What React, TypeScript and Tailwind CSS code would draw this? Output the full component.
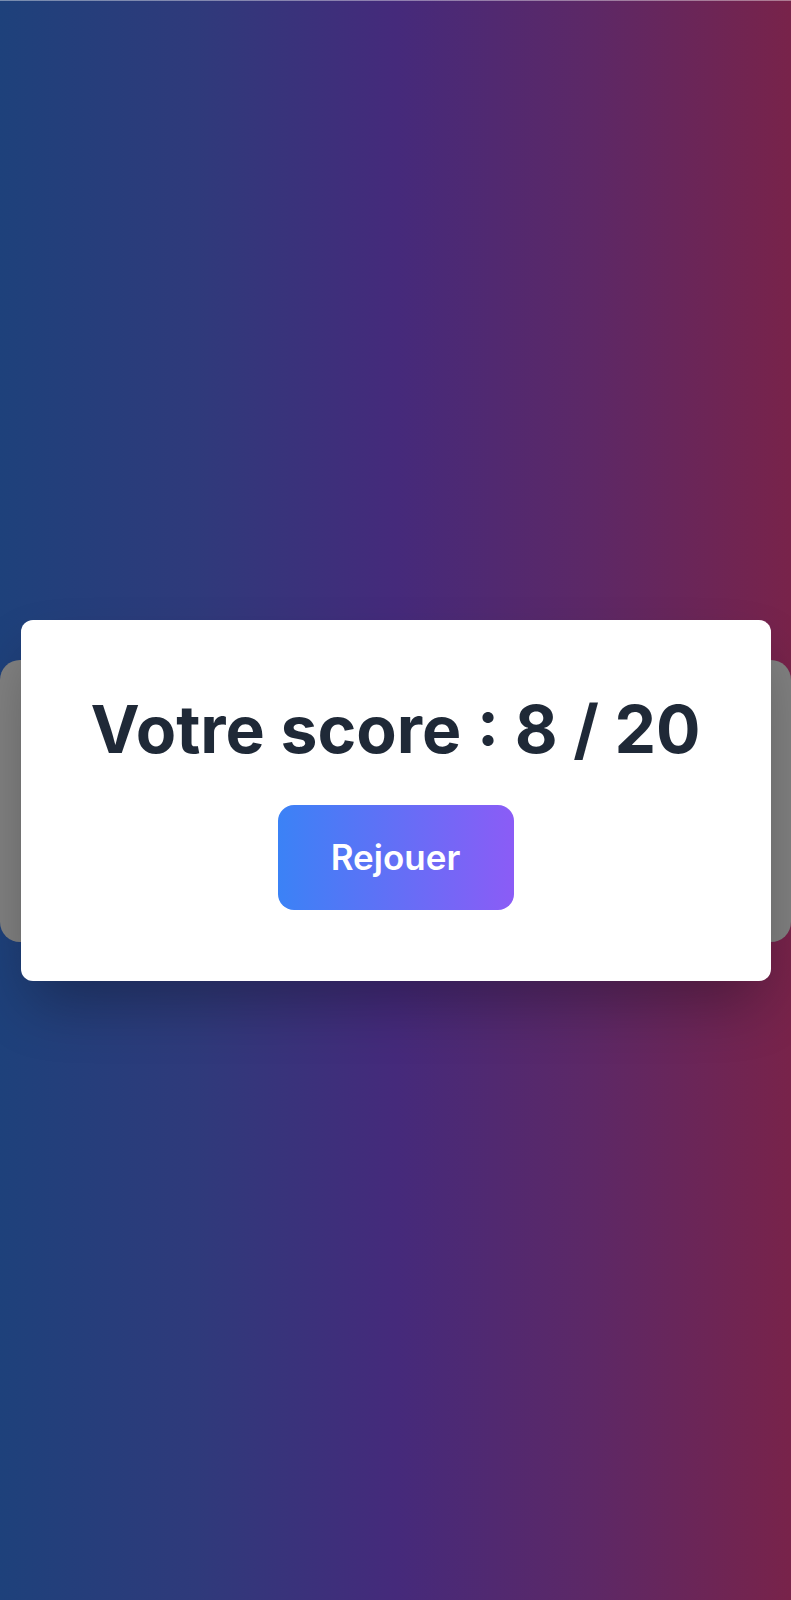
import React from "react";

export default function App() {
  return (
    <div
      className="relative h-[1600px] w-full overflow-hidden border-t border-white/40 bg-[linear-gradient(to_right,#1e417b,#2f3a7b,#452a7b,#5d2866,#78234a)]"
      style={{ fontFamily: "Inter, 'Noto Sans', sans-serif" }}
    >
      <div className="grid h-full w-full place-items-center">
        {/* quiz panel behind, dimmed */}
        <div className="col-start-1 row-start-1 h-[282px] w-[791px] rounded-[20px] bg-[#808080]" />
        {/* result modal */}
        <div className="col-start-1 row-start-1 flex h-[361px] w-[750px] flex-col items-center rounded-xl bg-white shadow-[0_30px_60px_-10px_rgba(0,0,0,0.3)]">
          <h1 className="mt-[76px] text-[66px] font-bold leading-none tracking-[0px] text-[#1f2937]">
            Votre score : 8 / 20
          </h1>
          <button className="mt-[43px] flex h-[105px] w-[236px] items-center justify-center rounded-2xl bg-[linear-gradient(to_right,#3b82f6,#8b5cf6)] text-[35px] font-semibold text-white">
            Rejouer
          </button>
        </div>
      </div>
    </div>
  );
}
